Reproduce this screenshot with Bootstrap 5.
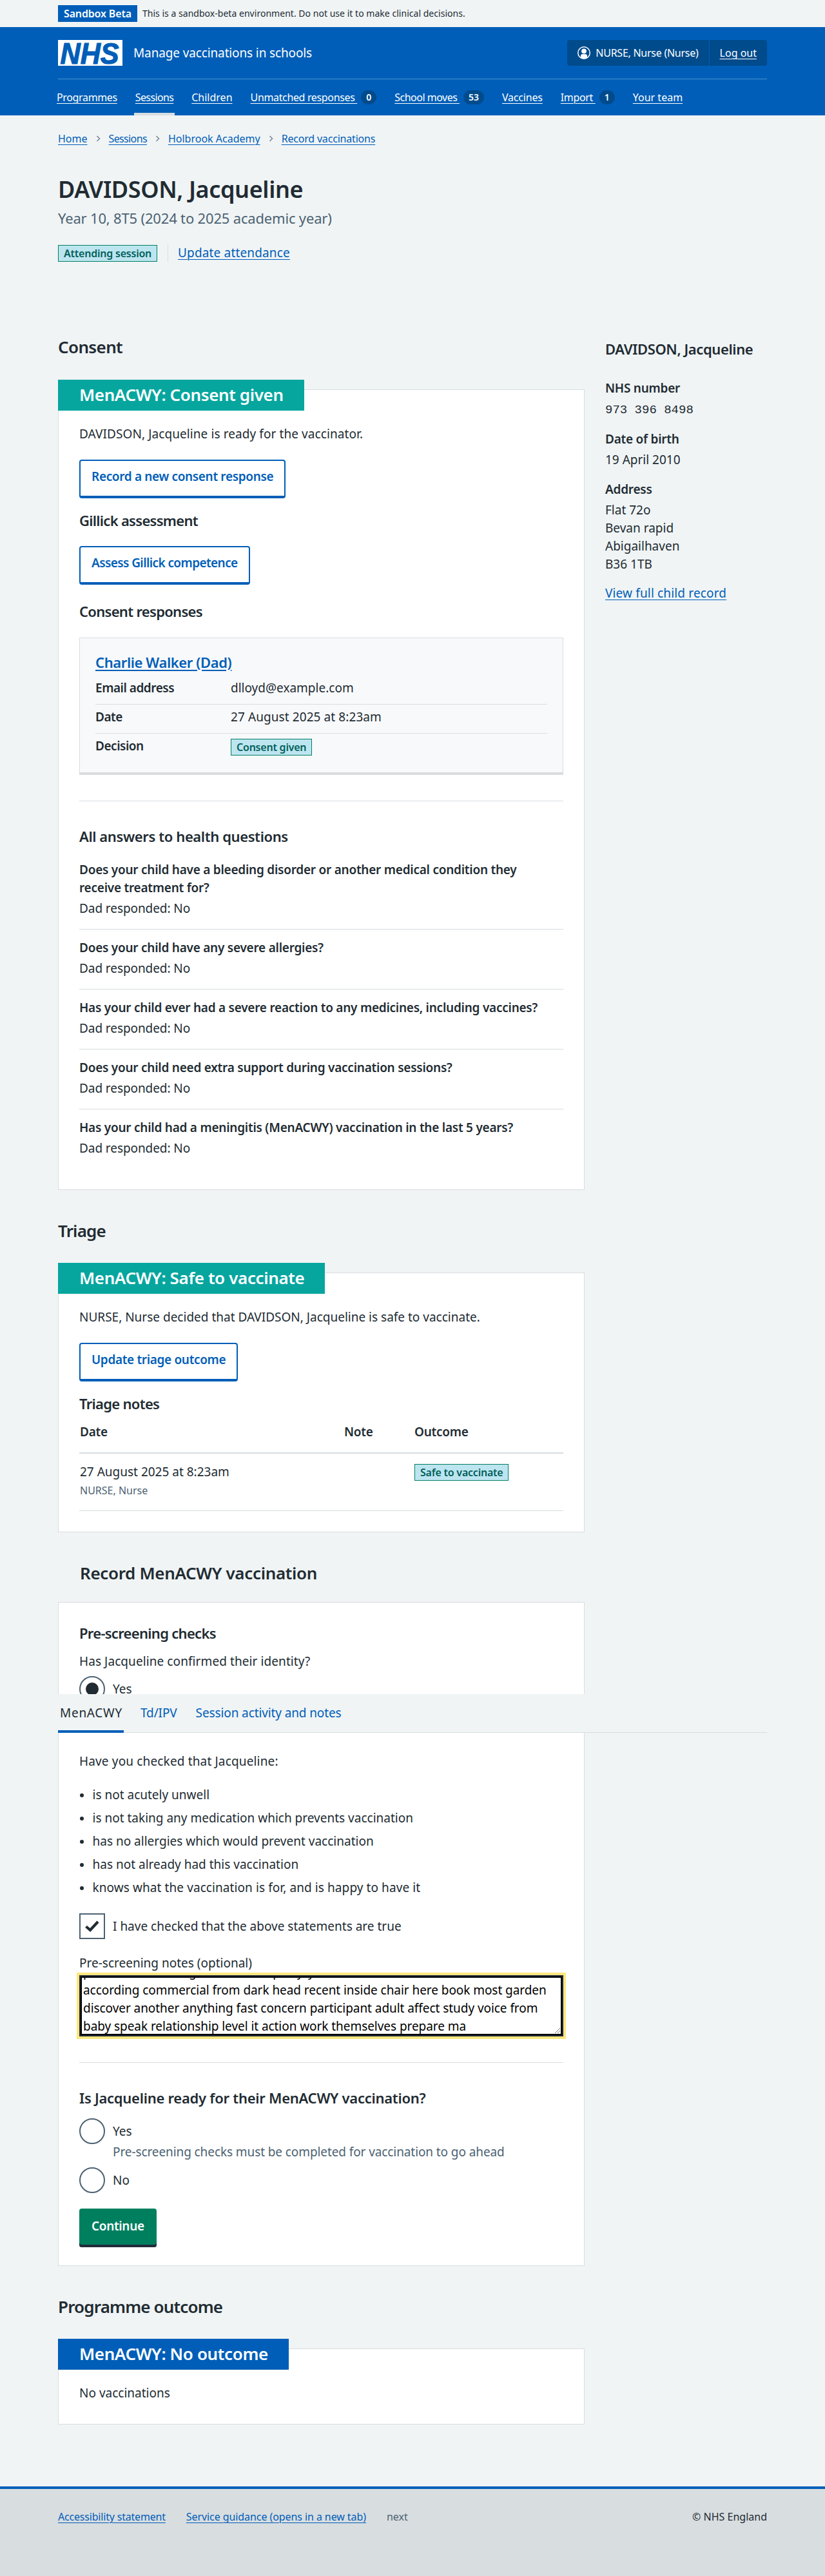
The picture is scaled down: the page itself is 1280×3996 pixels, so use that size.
<!DOCTYPE html>
<html lang="en">
<head>
<meta charset="utf-8">
<meta name="viewport" content="width=device-width, initial-scale=1">
<title>DAVIDSON, Jacqueline – Manage vaccinations in schools</title>
<link rel="stylesheet" href="https://cdn.jsdelivr.net/npm/bootstrap@5.3.0/dist/css/bootstrap.min.css">
<style>
:root{--nhs-blue:#005eb8;--nhs-ink:#212b32;--nhs-grey:#4c6272;--nhs-line:#d8dde0}
body{background:#f0f4f5;color:var(--nhs-ink);font-family:"Noto Sans","Open Sans",sans-serif;font-size:19px;line-height:28px}
p,h1,h2,h3,h4,ul,dl,dd{margin:0}
a{color:var(--nhs-blue);text-decoration-thickness:1px;text-underline-offset:3px}
dt,th{font-weight:600;letter-spacing:-.013em}
.wrap{width:1100px;margin:0 auto}
.envbar{height:42px;font-size:14px;letter-spacing:.002em}
.envtag{background:var(--nhs-blue);color:#fff;font-size:16px;font-weight:600;line-height:26px;height:26px;padding:0 9px;letter-spacing:-.01em}
.masthead{background:var(--nhs-blue);color:#fff;height:137px}
.masthead a{color:#fff}
.brandrow{padding:20px 0;border-bottom:1px solid #4a93cc}
.servicename{margin-left:17px;letter-spacing:-.007em}
.account{height:40px;background:#004b8c;border-radius:4px;font-size:16px;line-height:40px}
.account>span{padding:0 16px}
.account>span:first-child{letter-spacing:-.016em}
.account>span+span{border-left:1px solid #005eb8}
.mainnav{margin-left:-4px;gap:24px;height:56px;font-size:16px;letter-spacing:-.022em}
.mainnav .item{height:56px;padding:4px 2px 0;border-bottom:4px solid transparent}
.mainnav .item.on{border-color:var(--nhs-line)}
.pill{background:#004b8c;border-radius:11px;height:22px;line-height:22px;min-width:24px;padding:0 8px;margin-left:6px;text-align:center;font-size:14px;font-weight:600;letter-spacing:0}
.crumbs{padding-top:24px;font-size:16px;line-height:24px}
.crumbs svg{margin:0 12.5px 0 13.5px}
h1{font-size:36px;line-height:44px;font-weight:600;margin-top:45px;letter-spacing:-.011em}
.caption{font-size:22px;color:var(--nhs-grey);margin-top:8px;letter-spacing:-.008em}
h2{font-size:26px;line-height:32px;font-weight:600;letter-spacing:-.013em}
h3{font-size:22px;line-height:28px;font-weight:600;letter-spacing:-.018em}
/* tracking steps */
.tr-a{letter-spacing:.0045em}.tr-0{letter-spacing:0}.tr-b{letter-spacing:-.005em}.tr-c{letter-spacing:-.012em}.tr-d{letter-spacing:-.024em}.tr-e{letter-spacing:-.032em}.tr-f{letter-spacing:-.04em}.tr-g{letter-spacing:.008em}
.state{display:inline-block;height:26px;line-height:24px;border:1px solid #007f61;background:#bce5f0;color:#00605a;font-size:16px;font-weight:600;padding:0 8px;letter-spacing:-.014em}
.attend{margin-top:28px;height:26px;line-height:24px}
.attend .next{margin-left:16px;padding-left:15px;border-left:1px solid var(--nhs-line)}
.content{margin-top:116px;position:relative;gap:32px}
.left{width:817px}.right{width:251px}
.panel{background:#fff;border:1px solid var(--nhs-line);padding:0 32px;margin-top:49px}
.panel .label{background:#06a69f;color:#fff;margin:-16px 0 22px -33px;height:48px;line-height:46px;width:fit-content;padding:0 32px 0 33px;letter-spacing:-.014em}
.panel .label.blue{background:var(--nhs-blue)}
.p-consent{margin-top:50px;height:1242px}.p-triage{height:403px}.p-record{margin-top:29px;height:1030px}.p-outcome{height:118px}
.panel-btn{display:block;width:fit-content;height:60px;border:2px solid var(--nhs-blue);border-bottom-width:4px;border-radius:4px;background:#fff;color:var(--nhs-blue);font-weight:600;padding:10px 17px 0;line-height:28px;letter-spacing:-.018em;text-decoration:none}
.panel-btn.tr-e{letter-spacing:-.031em}
.panel-btn.go{background:#007f5f;color:#fff;border:0;box-shadow:inset 0 -4px #212b3a;padding:0 19px 6px}
.answer-card{background:#f8f9fb;border:1px solid var(--nhs-line);border-bottom-width:4px;height:213px;padding:23px 24px 0}
.answer-card h3 a{text-decoration-thickness:2px}
.line{border-top:1px solid var(--nhs-line)}
.kv{margin-top:7px}
.kv>div{height:45px;padding-top:5.5px;border-bottom:1px solid var(--nhs-line)}
.kv>div:last-child{border:0}
.kv dt{width:210px;letter-spacing:-.025em}
.kv .state{margin-top:3px}
.qa>div{padding:14px 0 18px;border-bottom:1px solid var(--nhs-line)}
.qa>div:first-child{padding-top:0}
.qa>div:last-child{border:0}
.qa dt{max-width:725px}
.qa dd{margin-top:4px;letter-spacing:-.004em}
.notes{width:751px;border-collapse:collapse;table-layout:fixed;margin-top:15.5px}
.notes .c1{width:410px}.notes .c2{width:109px}
.notes th{height:48px;vertical-align:top;border-bottom:2px solid var(--nhs-line)}
.notes td{height:89px;vertical-align:top;padding-top:14px;border-bottom:1px solid var(--nhs-line)}
.notes .by{font-size:16px;line-height:24px;color:var(--nhs-grey);margin-top:3px}
.choice{height:40px;gap:12px}
.ring{width:40px;height:40px;border:2px solid #4c6272;border-radius:50%;display:grid;place-items:center;background:#fff}
.ring.sq{border-radius:0}
.ring i{width:20px;height:20px;border-radius:50%;background:var(--nhs-ink)}
.checks{list-style:none;padding:0;margin-top:24px}
.checks li{display:flex;align-items:center;margin-bottom:8px}
.checks li::before{content:"";width:6px;height:6px;border-radius:50%;background:var(--nhs-ink);margin:2px 13.5px 0 1px}
.notebox{margin-top:5px;height:95px;background:#fff;color:#000;border:2px solid #212b3a;box-shadow:inset 0 0 0 2px #000,0 0 0 4px #fce77d;padding:2px 4px 0;position:relative}
.notebox .clip{height:89px;overflow:hidden;display:flex;flex-direction:column;justify-content:flex-end;white-space:nowrap}
.notebox .clip div{flex:none;letter-spacing:-.003em}
.notebox svg{position:absolute;right:3px;bottom:3px}
.hint{color:var(--nhs-grey);margin:-2px 0 0 52px}
.tabsbar{position:absolute;left:0;top:2106px;width:1100px;height:60px;background:#f0f4f5;border-bottom:1px solid var(--nhs-line)}
.tabsbar span{height:60px;padding:15px 3px 0;color:var(--nhs-blue);margin-right:23px;letter-spacing:-.006em}
.tabsbar span.on{color:var(--nhs-ink);border-bottom:4px solid var(--nhs-blue);letter-spacing:.038em;padding-right:2px}
.side{margin-top:33px}
.side dd{margin:4px 0 18px}
.side dd.nhsno{font-family:"Liberation Mono",monospace;padding-top:2px;margin-bottom:17px}
.side dd:last-child{margin-bottom:17px}
footer{margin-top:96px;height:140px;border-top:4px solid var(--nhs-blue);background:var(--nhs-line);font-size:16px;line-height:24px;padding-top:31px}
.footlinks{gap:32px}
.muted{color:var(--nhs-grey)}
.record-title{padding-left:34px}
.s5{margin-top:5px}.s9{margin-top:9px}.s10{margin-top:10px}.s16{margin-top:16px}.s18{margin-top:18px}.s19{margin-top:19.5px}.s23{margin-top:23px}.s24{margin-top:24px}.s25{margin-top:25px}.s26{margin-top:26px}.s27{margin-top:27px}.s32{margin-top:32.5px}.s39{margin-top:39px}.s40{margin-top:40px}.s47{margin-top:47px}.s78{margin-top:78.5px}
</style>
</head>
<body>
<div class="envbar"><div class="wrap d-flex align-items-center h-100"><span class="envtag">Sandbox Beta</span><span class="ms-2">This is a sandbox-beta environment. Do not use it to make clinical decisions.</span></div></div>
<header class="masthead"><div class="wrap">
  <div class="brandrow d-flex align-items-center">
    <svg width="100" height="40" viewBox="0 0 100 40" aria-label="NHS"><rect width="100" height="40" fill="#fff"/><text x="3.5" y="36.6" font-family="Liberation Sans, Arial, sans-serif" font-weight="700" font-style="italic" font-size="47" textLength="91" lengthAdjust="spacingAndGlyphs" fill="#005eb8" stroke="#005eb8" stroke-width="1.2">NHS</text></svg>
    <span class="servicename">Manage vaccinations in schools</span>
    <div class="account d-flex ms-auto">
      <span class="d-flex align-items-center"><svg class="me-2" width="20" height="20" viewBox="0 0 20 20"><circle cx="10" cy="10" r="9.25" fill="none" stroke="#fff" stroke-width="1.5"/><circle cx="10" cy="7.3" r="3.9" fill="#fff"/><path d="M5 17V14.6Q5 12 7.6 12h4.8Q15 12 15 14.6V17Q10 20.4 5 17Z" fill="#fff"/></svg>NURSE, Nurse (Nurse)</span><span><a href="#">Log out</a></span>
    </div>
  </div>
  <nav class="mainnav d-flex">
    <div class="item d-flex align-items-center"><a href="#">Programmes</a></div>
    <div class="item on d-flex align-items-center"><a class="tr-f" href="#">Sessions</a></div>
    <div class="item d-flex align-items-center"><a class="tr-0" href="#">Children</a></div>
    <div class="item d-flex align-items-center"><a href="#">Unmatched responses&nbsp;</a><span class="pill">0</span></div>
    <div class="item d-flex align-items-center"><a class="tr-e" href="#">School moves&nbsp;</a><span class="pill">53</span></div>
    <div class="item d-flex align-items-center"><a class="tr-c" href="#">Vaccines</a></div>
    <div class="item d-flex align-items-center"><a href="#">Import&nbsp;</a><span class="pill">1</span></div>
    <div class="item d-flex align-items-center"><a class="tr-0" href="#">Your team</a></div>
  </nav>
</div></header>
<main class="wrap">
  <nav class="crumbs d-flex align-items-center">
    <a href="#">Home</a><svg width="7" height="10" viewBox="0 0 7 10"><path d="M1.5 1l4 4-4 4" fill="none" stroke="#768692" stroke-width="1.5"/></svg>
    <a class="tr-f" href="#">Sessions</a><svg width="7" height="10" viewBox="0 0 7 10"><path d="M1.5 1l4 4-4 4" fill="none" stroke="#768692" stroke-width="1.5"/></svg>
    <a href="#">Holbrook Academy</a><svg width="7" height="10" viewBox="0 0 7 10"><path d="M1.5 1l4 4-4 4" fill="none" stroke="#768692" stroke-width="1.5"/></svg>
    <a class="tr-c" href="#">Record vaccinations</a>
  </nav>
  <h1>DAVIDSON, Jacqueline</h1>
  <p class="caption">Year 10, 8T5 (2024 to 2025 academic year)</p>
  <div class="attend d-flex"><span class="state">Attending session</span><span class="next"><a class="tr-g" href="#">Update attendance</a></span></div>

  <div class="content d-flex align-items-start">
    <div class="left">
      <h2 class="tr-d">Consent</h2>
      <section class="panel p-consent">
        <h2 class="label">MenACWY: Consent given</h2>
        <p class="tr-a">DAVIDSON, Jacqueline is ready for the vaccinator.</p>
        <a class="panel-btn s26" href="#">Record a new consent response</a>
        <h3 class="s19 tr-e">Gillick assessment</h3>
        <a class="panel-btn tr-e s26" href="#">Assess Gillick competence</a>
        <h3 class="s27 tr-e">Consent responses</h3>
        <div class="answer-card s27">
          <h3><a href="#">Charlie Walker (Dad)</a></h3>
          <dl class="kv">
            <div class="d-flex"><dt>Email address</dt><dd>dlloyd@example.com</dd></div>
            <div class="d-flex"><dt>Date</dt><dd class="tr-a">27 August 2025 at 8:23am</dd></div>
            <div class="d-flex"><dt>Decision</dt><dd><span class="state d-block">Consent given</span></dd></div>
          </dl>
        </div>
        <div class="line s40"></div>
        <h3 class="s40">All answers to health questions</h3>
        <dl class="qa s24">
          <div><dt>Does your child have a bleeding disorder or another medical condition they receive treatment for?</dt><dd>Dad responded: No</dd></div>
          <div><dt>Does your child have any severe allergies?</dt><dd>Dad responded: No</dd></div>
          <div><dt>Has your child ever had a severe reaction to any medicines, including vaccines?</dt><dd>Dad responded: No</dd></div>
          <div><dt>Does your child need extra support during vaccination sessions?</dt><dd>Dad responded: No</dd></div>
          <div><dt>Has your child had a meningitis (MenACWY) vaccination in the last 5 years?</dt><dd>Dad responded: No</dd></div>
        </dl>
      </section>

      <h2 class="s47 tr-e">Triage</h2>
      <section class="panel p-triage">
        <h2 class="label">MenACWY: Safe to vaccinate</h2>
        <p>NURSE, Nurse decided that DAVIDSON, Jacqueline is safe to vaccinate.</p>
        <a class="panel-btn s26" href="#">Update triage outcome</a>
        <h3 class="s19 tr-e">Triage notes</h3>
        <table class="notes">
          <colgroup><col class="c1"><col class="c2"><col></colgroup>
          <thead><tr><th>Date</th><th>Note</th><th>Outcome</th></tr></thead>
          <tbody><tr><td>27 August 2025 at 8:23am<div class="by">NURSE, Nurse</div></td><td></td><td><span class="state">Safe to vaccinate</span></td></tr></tbody>
        </table>
      </section>

      <h2 class="s47 record-title">Record MenACWY vaccination</h2>
      <section class="panel p-record">
        <h3 class="s32 tr-e">Pre-screening checks</h3>
        <p class="s16 tr-a">Has Jacqueline confirmed their identity?</p>
        <div class="choice d-flex align-items-center s9"><span class="ring"><i></i></span>Yes</div>
        <p class="s78 tr-g">Have you checked that Jacqueline:</p>
        <ul class="checks">
          <li>is not acutely unwell</li><li>is not taking any medication which prevents vaccination</li><li>has no allergies which would prevent vaccination</li><li>has not already had this vaccination</li><li class="tr-a">knows what the vaccination is for, and is happy to have it</li>
        </ul>
        <div class="choice d-flex align-items-center s26"><span class="ring sq"><svg width="24" height="20" viewBox="0 0 24 20"><path d="M2.5 10.5l6.5 5.5L21 3" fill="none" stroke="#212b32" stroke-width="4.2"/></svg></span>I have checked that the above statements are true</div>
        <p class="s23">Pre-screening notes (optional)</p>
        <div class="notebox"><div class="clip"><div>politics common right maintain up enjoy</div><div>according commercial from dark head recent inside chair here book most garden</div><div>discover another anything fast concern participant adult affect study voice from</div><div>baby speak relationship level it action work themselves prepare ma</div></div>
          <svg width="8" height="8" viewBox="0 0 8 8"><path d="M0 8L8 0M4 8l4-4" stroke="#777" stroke-width="1"/></svg></div>
        <div class="line s40"></div>
        <h3 class="s40 tr-c">Is Jacqueline ready for their MenACWY vaccination?</h3>
        <div class="choice d-flex align-items-center s18"><span class="ring"></span>Yes</div>
        <p class="hint tr-b">Pre-screening checks must be completed for vaccination to go ahead</p>
        <div class="choice d-flex align-items-center s10"><span class="ring"></span>No</div>
        <button type="button" class="panel-btn go s24">Continue</button>
      </section>

      <h2 class="s47 tr-e">Programme outcome</h2>
      <section class="panel p-outcome">
        <h2 class="label blue">MenACWY: No outcome</h2>
        <p>No vaccinations</p>
      </section>
    </div>
    <aside class="right">
      <h3 class="s5">DAVIDSON, Jacqueline</h3>
      <dl class="side">
        <dt>NHS number</dt><dd class="nhsno">973 396 8498</dd>
        <dt>Date of birth</dt><dd>19 April 2010</dd>
        <dt>Address</dt><dd>Flat 72o<br>Bevan rapid<br>Abigailhaven<br>B36 1TB</dd>
      </dl>
      <a class="tr-g" href="#">View full child record</a>
    </aside>
    <div class="tabsbar d-flex"><span class="on">MenACWY</span><span>Td/IPV</span><span>Session activity and notes</span></div>
  </div>
</main>
<footer><div class="wrap d-flex footlinks"><a class="tr-c" href="#">Accessibility statement</a><a class="tr-b" href="#">Service guidance (opens in a new tab)</a><span class="muted">next</span><span class="ms-auto">© NHS England</span></div></footer>
<script src="https://cdn.jsdelivr.net/npm/bootstrap@5.3.0/dist/js/bootstrap.bundle.min.js"></script>
</body>
</html>
